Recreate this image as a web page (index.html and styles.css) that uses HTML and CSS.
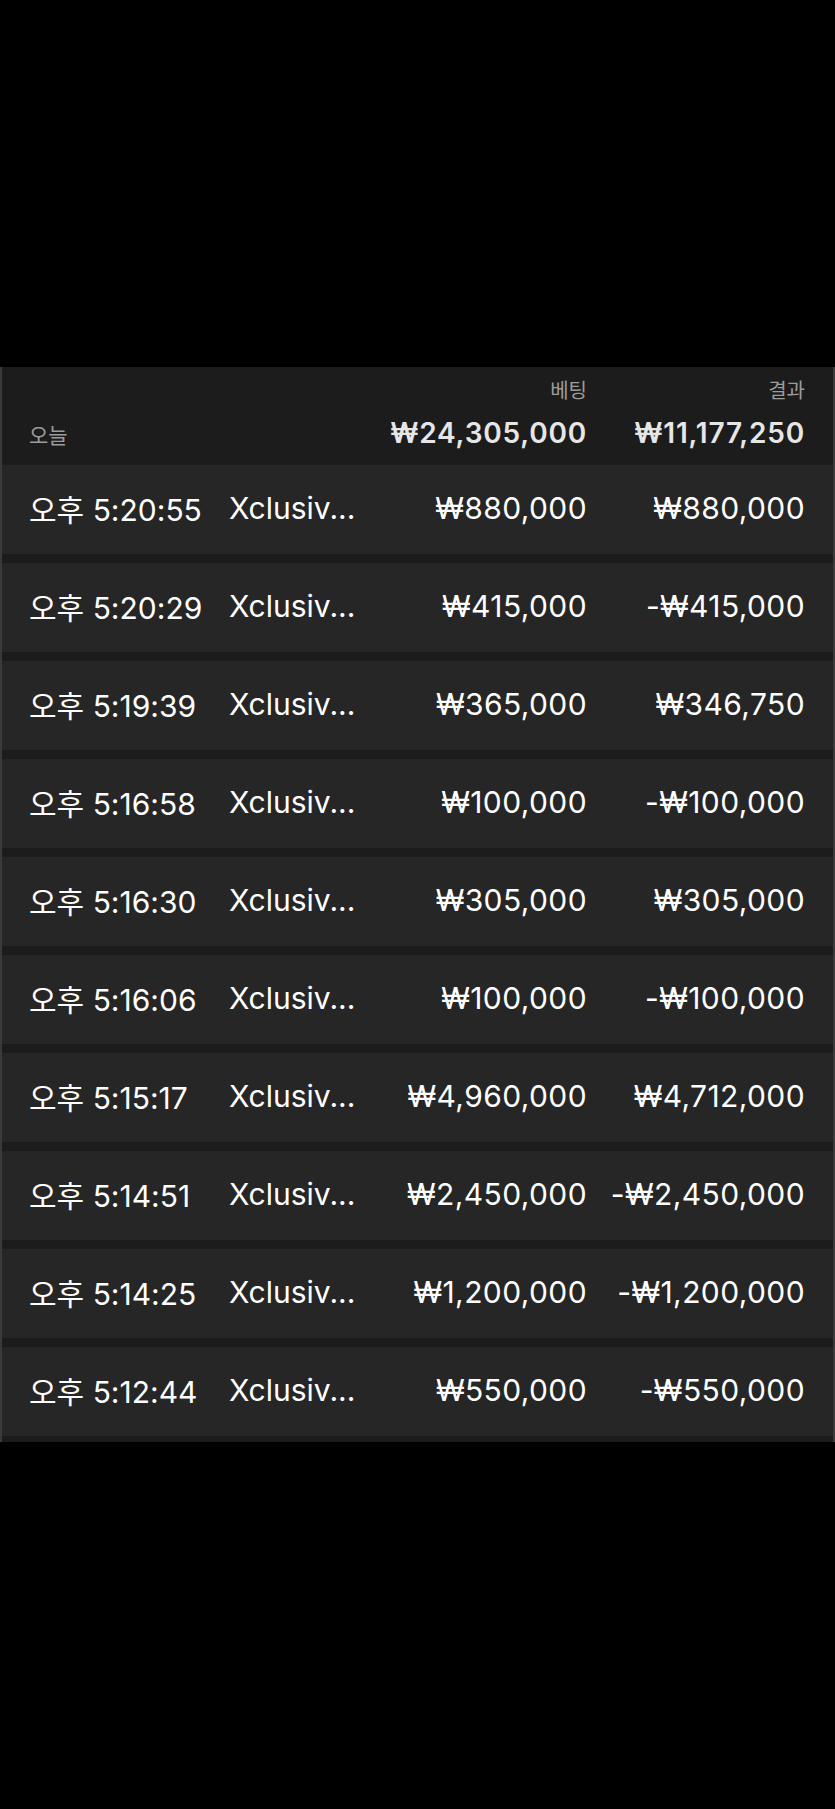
FILE: index.html
```html
<!DOCTYPE html>
<html lang="ko">
<head>
    <meta charset="UTF-8">
    <meta name="viewport" content="width=device-width, initial-scale=1.0">
    <title>베팅 내역</title>
    <link rel="stylesheet" href="styles.css">
</head>
<body>
    <div class="screen">
        <div class="history">
            <!-- Summary header -->
            <div class="summary">
                <div class="summary-day">오늘</div>
                <div class="summary-col bet-col">
                    <span class="summary-label">베팅</span>
                    <span class="summary-total">₩24,305,000</span>
                </div>
                <div class="summary-col result-col">
                    <span class="summary-label">결과</span>
                    <span class="summary-total">₩11,177,250</span>
                </div>
            </div>

            <!-- Bet rows -->
            <div id="rows" class="rows"></div>
        </div>
    </div>

    <script>
        const bets = [
            { time: '오후 5:20:55', game: 'Xclusiv...', bet: '₩880,000', result: '₩880,000' },
            { time: '오후 5:20:29', game: 'Xclusiv...', bet: '₩415,000', result: '-₩415,000' },
            { time: '오후 5:19:39', game: 'Xclusiv...', bet: '₩365,000', result: '₩346,750' },
            { time: '오후 5:16:58', game: 'Xclusiv...', bet: '₩100,000', result: '-₩100,000' },
            { time: '오후 5:16:30', game: 'Xclusiv...', bet: '₩305,000', result: '₩305,000' },
            { time: '오후 5:16:06', game: 'Xclusiv...', bet: '₩100,000', result: '-₩100,000' },
            { time: '오후 5:15:17', game: 'Xclusiv...', bet: '₩4,960,000', result: '₩4,712,000' },
            { time: '오후 5:14:51', game: 'Xclusiv...', bet: '₩2,450,000', result: '-₩2,450,000' },
            { time: '오후 5:14:25', game: 'Xclusiv...', bet: '₩1,200,000', result: '-₩1,200,000' },
            { time: '오후 5:12:44', game: 'Xclusiv...', bet: '₩550,000', result: '-₩550,000' }
        ];

        const rows = document.getElementById('rows');

        // Render each bet as a row
        bets.forEach(b => {
            const row = document.createElement('div');
            row.classList.add('row');
            row.innerHTML = `
                <span class="time">${b.time}</span>
                <span class="game">${b.game}</span>
                <span class="bet">${b.bet}</span>
                <span class="result">${b.result}</span>
            `;
            rows.appendChild(row);
        });
    </script>
</body>
</html>
```

FILE: styles.css
```css
body {
    margin: 0;
    padding: 0;
    background-color: #000;
    font-family: Inter, "Noto Sans CJK KR", sans-serif;
    color: #fff;
}
.screen {
    height: 1809px;
    padding-top: 367px;
    box-sizing: border-box;
}
.history {
    background: #1c1c1c;
    border-left: 2px solid #3a3a3a;
    border-right: 2px solid #3a3a3a;
    padding-bottom: 6px;
}
.summary {
    display: flex;
    align-items: flex-end;
    height: 98px;
    box-sizing: border-box;
    padding: 11px 28px 15px 27px;
}
.summary-day {
    flex: 1;
    font-size: 21px;
    color: #9c9c9c;
    line-height: 28px;
}
.summary-col {
    display: flex;
    flex-direction: column;
    align-items: flex-end;
}
.result-col {
    width: 218px;
}
.summary-label {
    font-size: 20px;
    line-height: 26px;
    color: #9c9c9c;
    margin-bottom: 12px;
}
.summary-total {
    font-size: 28px;
    font-weight: 600;
    line-height: 34px;
    letter-spacing: 0.8px;
    color: #e6e6e6;
}
.rows {
    display: flex;
    flex-direction: column;
    gap: 9px;
}
.row {
    display: flex;
    align-items: center;
    height: 89px;
    box-sizing: border-box;
    padding: 0 28px 3px 27px;
    background: #262626;
    font-size: 30px;
    white-space: nowrap;
}
.time {
    width: 200px;
}
.game {
    flex: 1;
}
.bet {
    text-align: right;
    letter-spacing: 0.4px;
}
.result {
    width: 218px;
    text-align: right;
    letter-spacing: 0.4px;
}
```
